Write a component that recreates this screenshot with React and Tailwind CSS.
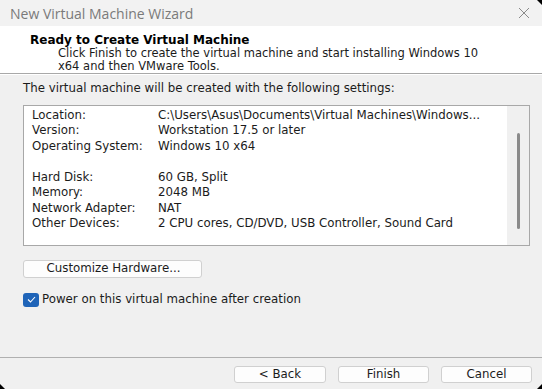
import React from 'react'

const rows = [
  ['Location:', 'C:\\Users\\Asus\\Documents\\Virtual Machines\\Windows...'],
  ['Version:', 'Workstation 17.5 or later'],
  ['Operating System:', 'Windows 10 x64'],
  null,
  ['Hard Disk:', '60 GB, Split'],
  ['Memory:', '2048 MB'],
  ['Network Adapter:', 'NAT'],
  ['Other Devices:', '2 CPU cores, CD/DVD, USB Controller, Sound Card'],
]

function WinButton({ children, className }) {
  return (
    <button
      type="button"
      className={'flex items-center justify-center rounded-[3px] border border-[#d0d0d0] bg-[#fdfdfd] text-[11.8px] text-[#1b1b1b] ' + className}
    >
      {children}
    </button>
  )
}

export default function App() {
  return (
    <div className="relative flex h-[389px] w-[542px] flex-col overflow-hidden bg-[#f0f0f0] font-['DejaVu_Sans',sans-serif] text-[11.8px] text-[#1b1b1b]">
      {/* title bar */}
      <div className="flex h-[26px] items-center justify-between bg-[#f2f2f2] pl-[10px] pr-[12px]">
        <span className="font-['Open_Sans',sans-serif] text-[14px] text-[#7a7a7a]">New Virtual Machine Wizard</span>
        <svg width="12" height="12" viewBox="0 0 12 12" className="text-[#8a8a8a]">
          <path d="M1 1 L11 11 M11 1 L1 11" stroke="currentColor" strokeWidth="1" fill="none" />
        </svg>
      </div>

      {/* header */}
      <div className="h-[48px] border-b border-[#a8a8a8] bg-white pl-[30px] pt-[7px] shadow-[0_1px_0_#ffffff]">
        <div className="text-[12px] font-bold leading-[14px] text-black">Ready to Create Virtual Machine</div>
        <div className="pl-[28px] text-[11.5px] leading-[13px]">
          Click Finish to create the virtual machine and start installing Windows 10
          <br />
          x64 and then VMware Tools.
        </div>
      </div>

      {/* body */}
      <div className="flex flex-1 flex-col px-[23px] pt-[7px]">
        <div className="leading-[14px]">The virtual machine will be created with the following settings:</div>
        <div className="mt-[10px] flex h-[141px] w-[507px] border border-[#a8a8a8] bg-white">
          <div className="flex-1 pl-[8px] pt-[2px]">
            {rows.map((r, i) =>
              r ? (
                <div key={i} className="flex h-[15.5px] items-center">
                  <span className="w-[126px]">{r[0]}</span>
                  <span>{r[1]}</span>
                </div>
              ) : (
                <div key={i} className="h-[15.5px]" />
              )
            )}
          </div>
          <div className="flex w-[22px] justify-center bg-[#f0f0f0] pt-[27px]">
            <div className="h-[96px] w-[3px] rounded-full bg-[#8a8a8a]" />
          </div>
        </div>

        <WinButton className="mt-[14px] h-[18px] w-[179px] pl-[2px]">Customize Hardware...</WinButton>

        <div className="mt-[13px] flex items-center">
          <div className="flex h-[14px] w-[16px] items-center justify-center rounded-[3px] bg-[#1f64b8]">
            <svg width="9" height="7" viewBox="0 0 9 7">
              <path d="M1 3.5 L3.5 6 L8 1" stroke="#ffffff" strokeWidth="1.1" fill="none" />
            </svg>
          </div>
          <span className="ml-[3px]">Power on this virtual machine after creation</span>
        </div>
      </div>

      {/* footer */}
      <div className="h-[32px] border-t border-[#b0b0b0]">
        <div className="flex justify-end gap-[12px] pr-[10px] pt-[8px]">
          <WinButton className="h-[17px] w-[92px]">&lt; Back</WinButton>
          <WinButton className="h-[17px] w-[91px]">Finish</WinButton>
          <WinButton className="h-[17px] w-[91px]">Cancel</WinButton>
        </div>
      </div>

      {/* window corners */}
      <div className="absolute right-0 top-0 h-0 w-0 border-l-[5px] border-t-[5px] border-l-transparent border-t-black" />
      <div className="absolute bottom-0 left-0 h-0 w-0 border-b-[5px] border-r-[5px] border-b-black border-r-transparent" />
      <div className="absolute bottom-0 right-0 h-0 w-0 border-b-[5px] border-l-[5px] border-b-black border-l-transparent" />
    </div>
  )
}
